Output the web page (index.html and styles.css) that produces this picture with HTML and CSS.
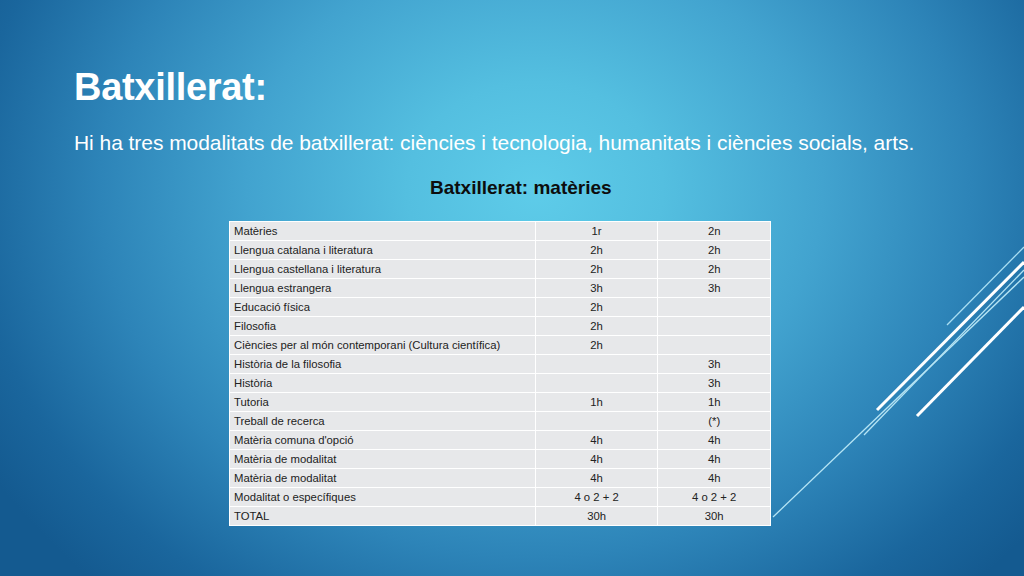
FILE: index.html
```html
<!DOCTYPE html>
<html lang="ca">
<head>
<meta charset="utf-8">
<title>Batxillerat</title>
<link rel="stylesheet" href="styles.css">
</head>
<body>
<div class="slide">
  <svg class="deco" width="1024" height="576" viewBox="0 0 1024 576">
    <line x1="1024" y1="247" x2="947" y2="325" stroke="#a9def2" stroke-width="1.3"/>
    <line x1="1024" y1="262" x2="877" y2="410" stroke="#ffffff" stroke-width="3"/>
    <line x1="1024" y1="270" x2="864" y2="435" stroke="#b5e4f4" stroke-width="1.3"/>
    <line x1="1024" y1="277" x2="773" y2="517" stroke="#b5e4f4" stroke-width="1.3"/>
    <line x1="1024" y1="307" x2="917" y2="416" stroke="#ffffff" stroke-width="3"/>
  </svg>
  <h1 class="title">Batxillerat:</h1>
  <p class="lead">Hi ha tres modalitats de batxillerat: ciències i tecnologia, humanitats i ciències socials, arts.</p>
  <h2 class="caption">Batxillerat: matèries</h2>
  <table class="subjects">
    <tr><td>Matèries</td><td>1r</td><td>2n</td></tr>
    <tr><td>Llengua catalana i literatura</td><td>2h</td><td>2h</td></tr>
    <tr><td>Llengua castellana i literatura</td><td>2h</td><td>2h</td></tr>
    <tr><td>Llengua estrangera</td><td>3h</td><td>3h</td></tr>
    <tr><td>Educació física</td><td>2h</td><td></td></tr>
    <tr><td>Filosofia</td><td>2h</td><td></td></tr>
    <tr><td>Ciències per al món contemporani (Cultura científica)</td><td>2h</td><td></td></tr>
    <tr><td>Història de la filosofia</td><td></td><td>3h</td></tr>
    <tr><td>Història</td><td></td><td>3h</td></tr>
    <tr><td>Tutoria</td><td>1h</td><td>1h</td></tr>
    <tr><td>Treball de recerca</td><td></td><td>(*)</td></tr>
    <tr><td>Matèria comuna d'opció</td><td>4h</td><td>4h</td></tr>
    <tr><td>Matèria de modalitat</td><td>4h</td><td>4h</td></tr>
    <tr><td>Matèria de modalitat</td><td>4h</td><td>4h</td></tr>
    <tr><td>Modalitat o específiques</td><td>4 o 2 + 2</td><td>4 o 2 + 2</td></tr>
    <tr><td>TOTAL</td><td>30h</td><td>30h</td></tr>
  </table>
</div>
</body>
</html>
```
FILE: styles.css
```css
html, body {
  margin: 0;
  padding: 0;
}
body {
  width: 1024px;
  height: 576px;
  overflow: hidden;
  font-family: "Liberation Sans", Arial, sans-serif;
}
.slide {
  position: relative;
  width: 1024px;
  height: 576px;
  box-sizing: border-box;
  padding: 63px 0 0 74px;
  display: flex;
  flex-direction: column;
  background:
    radial-gradient(ellipse 640px 540px at 535px 190px, #5ecce9 0%, #54bfe0 20%, #42a3cf 45%, #2d84b8 68%, #1a669d 88%, #145a90 100%);
  background-color: #145a90;
}
.deco {
  position: absolute;
  left: 0;
  top: 0;
  pointer-events: none;
}
.title {
  margin: 0;
  color: #ffffff;
  font-size: 38px;
  font-weight: bold;
  line-height: 48px;
  letter-spacing: -0.3px;
}
.lead {
  margin: 19px 0 0 0;
  color: #ffffff;
  font-size: 21px;
  line-height: 26px;
  letter-spacing: -0.05px;
}
.caption {
  margin: 20px 0 0 356px;
  color: #0d0d0d;
  font-size: 19px;
  font-weight: bold;
  line-height: 24px;
}
.subjects {
  margin: 21px 0 0 155px;
  border-collapse: collapse;
  width: 542px;
  font-size: 11.3px;
  color: #222;
}
.subjects td {
  height: 19px;
  box-sizing: border-box;
  padding: 0 4px;
  background: #e7e8ea;
  border: 1.5px solid #ffffff;
  line-height: 16px;
  white-space: nowrap;
}
.subjects td:first-child {
  width: 306px;
  text-align: left;
}
.subjects td:nth-child(2) {
  width: 123px;
  text-align: center;
}
.subjects td:nth-child(3) {
  width: 113px;
  text-align: center;
}
```
